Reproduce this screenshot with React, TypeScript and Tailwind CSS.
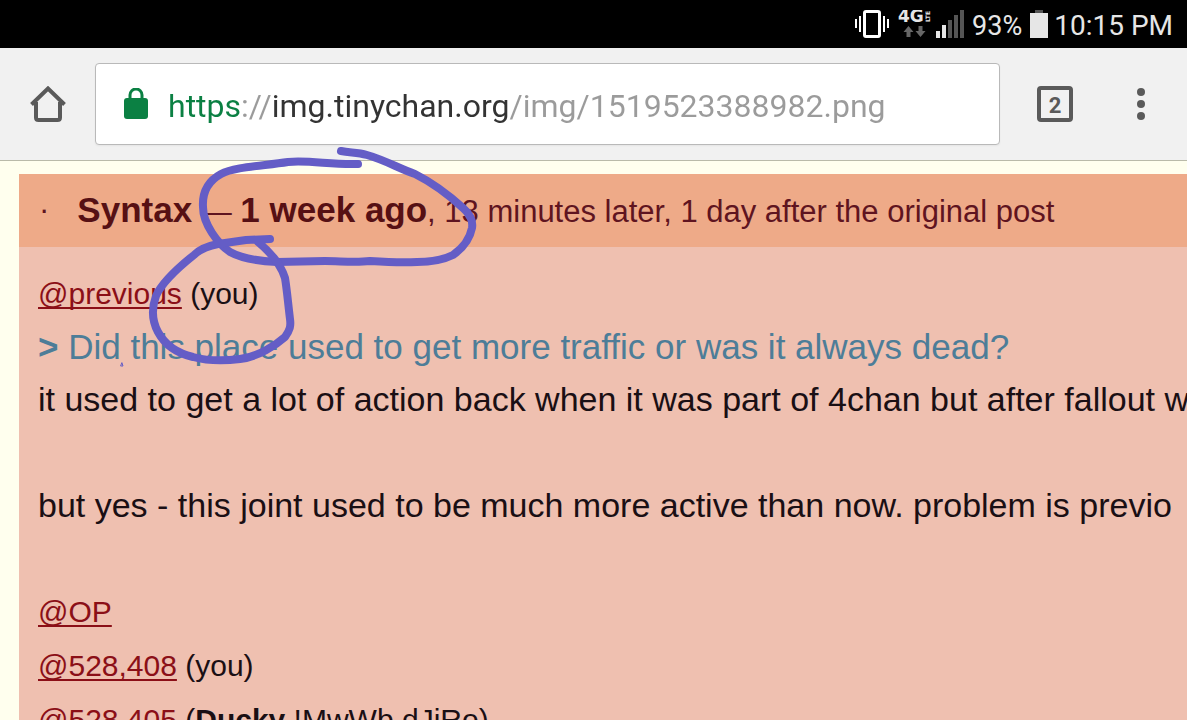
import { useState } from 'react';

const signalBars = [
  { x: 0, height: 7, on: true },
  { x: 6, height: 13, on: true },
  { x: 12, height: 18, on: false },
  { x: 18, height: 23, on: false },
  { x: 24, height: 28, on: false },
];

function StatusBar() {
  return (
    <header className="flex h-12 shrink-0 items-center justify-end bg-black pr-3.5 font-['Roboto',sans-serif] text-[#e6e6e6]">
      {/* Vibrate mode */}
      <svg className="mr-2" width="35" height="28" viewBox="0 0 35 28" fill="none" stroke="#fff" aria-label="Vibrate">
        <rect x="9.5" y="1.5" width="15" height="25" rx="1.5" strokeWidth="3" />
        <path d="M1 9v9M5 6v16M29 6v16M33 9v9" strokeWidth="2" />
      </svg>

      {/* Network type */}
      <svg className="mr-1" width="34" height="28" viewBox="0 0 34 28" fill="#e6e6e6" aria-label="4G LTE">
        <text x="0" y="12" fontFamily="DejaVu Sans" fontWeight="bold" fontSize="17">4G</text>
        <text x="0" y="0" fontFamily="DejaVu Sans" fontWeight="bold" fontSize="6" transform="translate(32 12) rotate(-90)">LTE</text>
        <path d="M10.500 16l5 6h-3v5h-4v-5h-3zM22.500 27l-5-6h3v-5h4v5h3z" fill="#666" />
      </svg>

      {/* Signal strength */}
      <svg className="mr-2" width="28" height="28" viewBox="0 0 28 28" aria-label="Signal">
        {signalBars.map((bar) => (
          <rect
            key={bar.x}
            x={bar.x}
            y={28 - bar.height}
            width="4"
            height={bar.height}
            fill={bar.on ? '#e6e6e6' : '#555'}
          />
        ))}
      </svg>

      <span className="mr-2 pt-1 text-[27px]">93%</span>

      <svg className="mr-1.5" width="18" height="28" viewBox="0 0 18 28" aria-label="Battery">
        <path d="M5 0h8v3H5z" fill="#555" />
        <path d="M0 3h18v25H0z" fill="#e6e6e6" />
      </svg>

      <time className="pt-1 text-[28px]">10:15 PM</time>
    </header>
  );
}

function Toolbar() {
  const [url, setUrl] = useState('https://img.tinychan.org/img/1519523388982.png');

  return (
    <nav className="flex h-[113px] shrink-0 items-center border-b border-[#b9baa9] bg-[#f1f1f1] pr-[34px] pl-[30px]">
      <button type="button" aria-label="Home">
        <svg width="36" height="36" viewBox="0 0 36 36" fill="none" stroke="#5a5a5a" strokeWidth="4" strokeLinejoin="round">
          <path d="M6 16v15.500Q6 34 8.500 34h19Q30 34 30 31.500V16" />
          <path d="M1.500 18.500L18 2.500l16.500 16" strokeLinejoin="miter" />
        </svg>
      </button>

      <div className="ml-[29px] flex h-[82px] min-w-0 flex-1 items-center rounded border border-[#b9b9b9] bg-white pr-6 pl-7 shadow-xs">
        <svg className="shrink-0" width="24" height="32" viewBox="0 0 24 32" aria-hidden="true">
          <path d="M6 12V7a6 6 0 0 1 12 0V12" fill="none" stroke="#0b8043" strokeWidth="3" />
          <rect y="10" width="24" height="21" rx="3" fill="#0b8043" />
        </svg>
        <input
          type="text"
          aria-label="Address"
          value={url}
          onChange={(e) => setUrl(e.target.value)}
          className="ml-5 h-12 min-w-0 flex-1 bg-[linear-gradient(to_right,#0b8043_73px,#9b9b9b_73px,#9b9b9b_104px,#333_104px,#333_342px,#9b9b9b_342px)] bg-clip-text pt-1 font-['Roboto',sans-serif] text-[32px] text-transparent outline-none"
        />
      </div>

      <button
        type="button"
        aria-label="Open tabs"
        className="ml-[37px] flex size-9 items-center justify-center rounded border-4 border-[#5a5a5a] pt-0.5 font-['Roboto',sans-serif] text-[22px] font-bold text-[#5a5a5a]"
      >
        2
      </button>

      <button type="button" aria-label="Menu" className="ml-14">
        <svg width="24" height="36" viewBox="0 0 24 36" fill="#5a5a5a">
          <circle cx="12" cy="6" r="4" />
          <circle cx="12" cy="18" r="4" />
          <circle cx="12" cy="30" r="4" />
        </svg>
      </button>
    </nav>
  );
}

function Cite({ children }: { children: string }) {
  return (
    <a href="#" className="text-[#8b0f17] underline decoration-2 underline-offset-3 [text-decoration-skip-ink:none]">
      {children}
    </a>
  );
}

function Post() {
  return (
    <article className="ml-[19px] flex-1 bg-[#efc0b0] whitespace-nowrap">
      <h2 className="flex h-[73px] items-center bg-[#eeaa88] pl-5 text-[31px] text-[#5f1420]">
        <span className="mr-7">·</span>
        <span>
          <b className="text-[35px] text-[#561014]">Syntax</b> — <b className="text-[35px] text-[#561014]">1 week ago</b>, 13
          minutes later, 1 day after the original post
        </span>
      </h2>

      <div className="pt-5 pl-[19px] text-[34px] leading-[53px] text-[#1a0f14]">
        <p className="text-[30px]">
          <Cite>@previous</Cite> (you)
        </p>
        <p className="text-[35px] text-[#4d7d98]">
          <b>&gt;</b> Did this place used to get more traffic or was it always dead?
        </p>
        <p>it used to get a lot of action back when it was part of 4chan but after fallout w</p>
        <br />
        <p>but yes - this joint used to be much more active than now. problem is previo</p>
        <br />
        <p className="text-[30px] leading-[54px]">
          <Cite>@OP</Cite>
        </p>
        <p className="text-[30px] leading-[54px]">
          <Cite>@528,408</Cite> (you)
        </p>
        <p className="text-[30px] leading-[54px]">
          <Cite>@528,405</Cite> (<b>Ducky</b> !MwWb.dJjRo)
        </p>
      </div>
    </article>
  );
}

// Freehand pen marks over the page
function PenMarks() {
  return (
    <svg
      className="pointer-events-none absolute top-0 left-0"
      width="520"
      height="400"
      viewBox="0 0 520 400"
      fill="none"
      stroke="#645dc6"
      strokeWidth="8"
      strokeLinecap="round"
      strokeLinejoin="round"
      aria-hidden="true"
    >
      <path d="M341 151C350 153 357 152 367 155C385 160 400 169 415 174C433 183 451 197 463 208C471 215 473 222 472 228C470 238 463 248 453 255C441 261 430 262 417 262C400 263 385 262 370 261C355 263 340 261 325 261L277 262C257 261 239 257 230 252C218 244 203 224 203 207C202 190 210 180 221 174C234 167 262 166 288 162C310 160 331 165 358 164" />
      <path d="M270 239L246 240L218 244C208 246 200 249 194 255C179 267 162 282 156 296C152 307 151 319 158 332C165 345 176 353 193 357C208 361 225 361 240 359C258 357 276 345 285 337C290 330 291 326 290 319C288 303 287 290 285 278C280 262 269 251 258 242" />
      <path d="M122 363l1 3h-2z" strokeWidth="1" />
    </svg>
  );
}

export default function App() {
  return (
    <div className="relative flex h-screen flex-col overflow-hidden bg-[#ffffee] font-['Liberation_Sans',Arial,sans-serif]">
      <StatusBar />
      <Toolbar />
      <main className="flex flex-1 flex-col pt-[13px]">
        <Post />
      </main>
      <PenMarks />
    </div>
  );
}
